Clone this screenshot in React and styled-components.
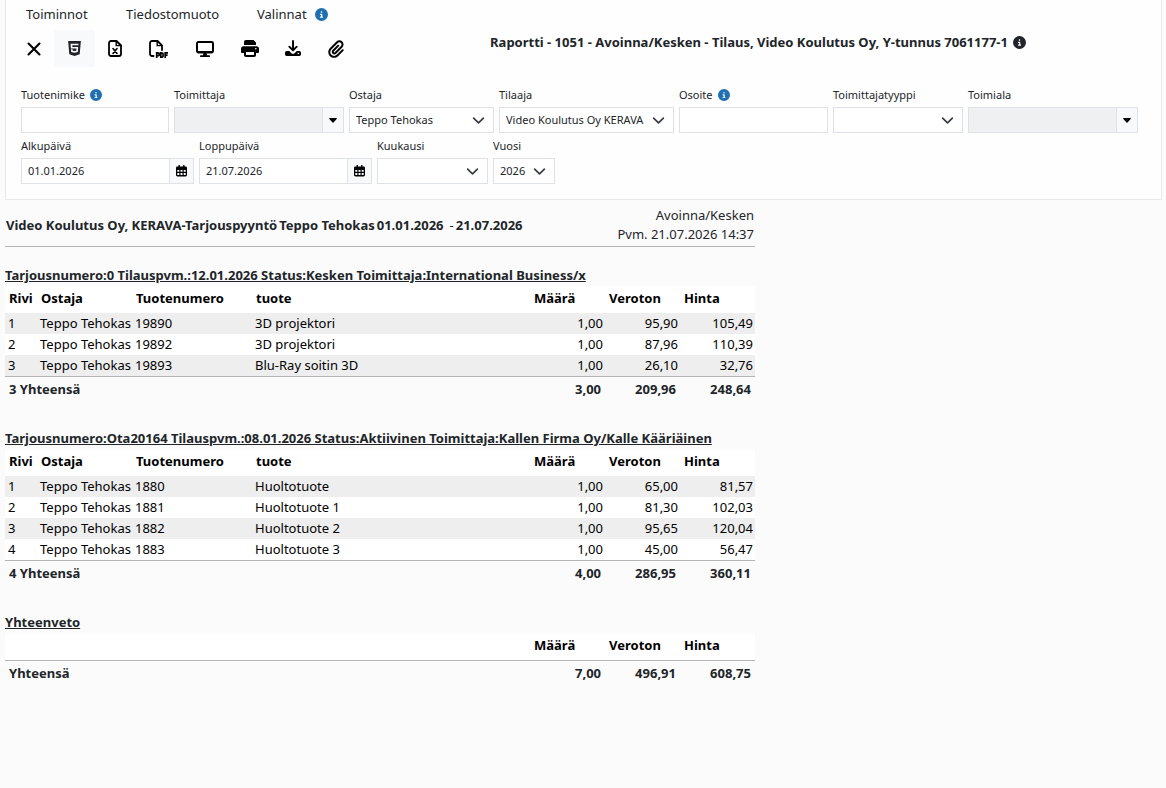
import React from "react";
import styled, { createGlobalStyle } from "styled-components";
import { FaHtml5, FaPaperclip, FaCircleInfo } from "react-icons/fa6";

const CloseIcon = () => (
  <Svg $width={14} $height={14} viewBox="0 0 14 14">
    <path
      d="M1.5 1.5l11 11M12.5 1.5l-11 11"
      stroke="currentColor"
      strokeWidth="2.1"
      strokeLinecap="round"
    />
  </Svg>
);

const ExcelIcon = () => (
  <Svg $width={14} $height={17} viewBox="0 0 14 17">
    <path
      d="M3 1h5.5L13 5.5V14a2 2 0 0 1-2 2H3a2 2 0 0 1-2-2V3a2 2 0 0 1 2-2z"
      fill="none"
      stroke="currentColor"
      strokeWidth="1.8"
      strokeLinejoin="round"
    />
    <path d="M8.2 1v4.6H13z" fill="none" stroke="currentColor" strokeWidth="1.4" />
    <path
      d="M5 8.6l4 4.8M9 8.6l-4 4.8"
      stroke="currentColor"
      strokeWidth="1.6"
      strokeLinecap="round"
    />
  </Svg>
);

const PdfIcon = () => (
  <Svg $width={19} $height={18} viewBox="0 0 19 18">
    <path
      d="M4.5 16H3a2 2 0 0 1-2-2V3a2 2 0 0 1 2-2h5.5L13 5.5V10"
      fill="none"
      stroke="currentColor"
      strokeWidth="1.8"
      strokeLinecap="round"
      strokeLinejoin="round"
    />
    <path d="M8.2 1v4.6H13" fill="none" stroke="currentColor" strokeWidth="1.4" />
    <path
      d="M7.7 18v-5.2h1.2a1.4 1.4 0 0 1 0 2.9H7.7M11.8 12.8v4.4h.8c1 0 1.5-.6 1.5-1.4v-1.6c0-.8-.5-1.4-1.5-1.4zM16.2 18v-5.2H19M16.2 15.2h2.4"
      fill="none"
      stroke="currentColor"
      strokeWidth="1.7"
    />
  </Svg>
);

const DisplayIcon = () => (
  <Svg $width={18} $height={16} viewBox="0 0 18 16">
    <rect
      x="1"
      y="1"
      width="16"
      height="10.5"
      rx="1.4"
      fill="none"
      stroke="currentColor"
      strokeWidth="2"
    />
    <path
      d="M1 10h16v1.5H1zM7.5 12h3l.5 2.2h2.2a.9.9 0 0 1 0 1.8H4.8a.9.9 0 0 1 0-1.8H7z"
      fill="currentColor"
    />
  </Svg>
);

const PrintIcon = () => (
  <Svg $width={18} $height={17} viewBox="0 0 18 17">
    <path
      d="M3 5V2a2 2 0 0 1 2-2h7.5L15 2.500V5zM2.500 6.200h13A2.500 2.500 0 0 1 18 8.700V12a1 1 0 0 1-1 1h-2v-2H3v2H1a1 1 0 0 1-1-1V8.700a2.500 2.500 0 0 1 2.500-2.500z"
      fill="currentColor"
    />
    <circle cx="14.800" cy="8.700" r=".8" fill="#fefefe" />
    <rect
      x="4"
      y="11"
      width="10"
      height="5"
      rx=".8"
      fill="none"
      stroke="currentColor"
      strokeWidth="2"
    />
  </Svg>
);

const DownloadIcon = () => (
  <Svg $width={16} $height={17} viewBox="0 0 16 17">
    <path
      d="M8 1v9M4.300 6.700L8 10.400l3.700-3.700"
      fill="none"
      stroke="currentColor"
      strokeWidth="1.9"
      strokeLinecap="round"
      strokeLinejoin="round"
    />
    <path
      d="M1.800 11h2.400l2.300 2.200a2.200 2.200 0 0 0 3 0l2.300-2.200h2.400A1.800 1.800 0 0 1 16 12.800v1.400a1.800 1.800 0 0 1-1.800 1.800H1.800A1.800 1.800 0 0 1 0 14.200v-1.400A1.800 1.800 0 0 1 1.800 11z"
      fill="currentColor"
    />
    <circle cx="13.300" cy="13.500" r=".8" fill="#fefefe" />
  </Svg>
);

const CalendarIcon = () => (
  <Svg $width={11} $height={12} viewBox="0 0 11 12">
    <path
      d="M3.2.7v2M7.8.7v2"
      stroke="currentColor"
      strokeWidth="1.5"
      strokeLinecap="round"
    />
    <rect x="0" y="1.5" width="11" height="10" rx="1.4" fill="currentColor" />
    <path
      d="M1.3 5h2v1.8h-2zM4.500 5h2v1.8h-2zM7.700 5h2v1.8h-2zM1.3 8h2v2h-2zM4.500 8h2v2h-2zM7.700 8h2v2h-2z"
      fill="#f8f9fa"
    />
  </Svg>
);

const CaretIcon = () => (
  <Svg $width={8} $height={5} viewBox="0 0 8 5">
    <path
      d="M.7 0h6.600a.6.6 0 0 1 .4 1L4.500 4.500a.7.7 0 0 1-1 0L.3 1a.6.6 0 0 1 .4-1z"
      fill="currentColor"
    />
  </Svg>
);

const actions = [
  { label: "Sulje", icon: CloseIcon, width: 41 },
  { label: "HTML", icon: FaHtml5, width: 41, size: 17, active: true },
  { label: "Excel", icon: ExcelIcon, width: 40 },
  { label: "PDF", icon: PdfIcon, width: 46 },
  { label: "Näyttö", icon: DisplayIcon, width: 47 },
  { label: "Tulosta", icon: PrintIcon, width: 43 },
  { label: "Lataa", icon: DownloadIcon, width: 44 },
  { label: "Liite", icon: FaPaperclip, width: 42, size: 18 },
];

const orders = [
  {
    title:
      "Tarjousnumero:0 Tilauspvm.:12.01.2026 Status:Kesken Toimittaja:International Business/x",
    rows: [
      ["1", "Teppo Tehokas", "19890", "3D projektori", "1,00", "95,90", "105,49"],
      ["2", "Teppo Tehokas", "19892", "3D projektori", "1,00", "87,96", "110,39"],
      ["3", "Teppo Tehokas", "19893", "Blu-Ray soitin 3D", "1,00", "26,10", "32,76"],
    ],
    total: ["3 Yhteensä", "3,00", "209,96", "248,64"],
  },
  {
    title:
      "Tarjousnumero:Ota20164 Tilauspvm.:08.01.2026 Status:Aktiivinen Toimittaja:Kallen Firma Oy/Kalle Kääriäinen",
    rows: [
      ["1", "Teppo Tehokas", "1880", "Huoltotuote", "1,00", "65,00", "81,57"],
      ["2", "Teppo Tehokas", "1881", "Huoltotuote 1", "1,00", "81,30", "102,03"],
      ["3", "Teppo Tehokas", "1882", "Huoltotuote 2", "1,00", "95,65", "120,04"],
      ["4", "Teppo Tehokas", "1883", "Huoltotuote 3", "1,00", "45,00", "56,47"],
    ],
    total: ["4 Yhteensä", "4,00", "286,95", "360,11"],
  },
  {
    title: "Yhteenveto",
    summary: true,
    rows: [],
    total: ["Yhteensä", "7,00", "496,91", "608,75"],
  },
];

function Field({ id, label, width, info, children }) {
  return (
    <FieldBox $width={width}>
      <FieldLabel htmlFor={id}>
        {label}
        {info && <FaCircleInfo size={12} color="#1f6fb2" />}
      </FieldLabel>
      {children}
    </FieldBox>
  );
}

function SelectField({ id, label, width, value = "" }) {
  return (
    <Field id={id} label={label} width={width}>
      <Control>
        <Select id={id} defaultValue={value}>
          <option value={value}>{value}</option>
        </Select>
        <Chevron viewBox="0 0 16 16" aria-hidden="true">
          <path d="m2 5 6 6 6-6" />
        </Chevron>
      </Control>
    </Field>
  );
}

function LookupField({ id, label }) {
  return (
    <Field id={id} label={label} width={170}>
      <Control>
        <Input id={id} disabled />
        <AddonButton type="button" $width={22} aria-label={label + " valinta"}>
          <CaretIcon />
        </AddonButton>
      </Control>
    </Field>
  );
}

function DateField({ id, label, value }) {
  return (
    <Field id={id} label={label} width={173}>
      <Control>
        <Input id={id} defaultValue={value} />
        <AddonButton type="button" $width={25} aria-label={label + " kalenteri"}>
          <CalendarIcon />
        </AddonButton>
      </Control>
    </Field>
  );
}

function OrderTable({ order }) {
  return (
    <section>
      <OrderTitle>{order.title}</OrderTitle>
      <Table>
        <colgroup>
          <Col $width={32} />
          <Col $width={95} />
          <Col $width={120} />
          <col />
          <Col $width={75} />
          <Col $width={75} />
          <Col $width={75} />
        </colgroup>
        <thead>
          <tr>
            {order.summary ? (
              <td colSpan={4} />
            ) : (
              <>
                <th>Rivi</th>
                <th>Ostaja</th>
                <th>Tuotenumero</th>
                <th>tuote</th>
              </>
            )}
            <th>Määrä</th>
            <th>Veroton</th>
            <th>Hinta</th>
          </tr>
        </thead>
        <tbody>
          {order.rows.map((row) => (
            <tr key={row[0]}>
              {row.map((cell, i) => (
                <Cell key={i} $number={i > 3}>
                  {cell}
                </Cell>
              ))}
            </tr>
          ))}
        </tbody>
        <tfoot>
          <tr>
            {order.total.map((cell, i) => (
              <TotalCell key={i} colSpan={i === 0 ? 4 : 1} $number={i > 0}>
                {cell}
              </TotalCell>
            ))}
          </tr>
        </tfoot>
      </Table>
    </section>
  );
}

export default function App() {
  return (
    <Page>
      <GlobalStyle />
      <Panel>
        <Top>
          <div>
            <Menu>
              <MenuItem $width={100}>Toiminnot</MenuItem>
              <MenuItem $width={131}>Tiedostomuoto</MenuItem>
              <MenuItem>
                Valinnat
                <FaCircleInfo size={13} color="#1f6fb2" />
              </MenuItem>
            </Menu>
            <Toolbar>
              {actions.map(({ label, icon: Icon, width, size, active }) => (
                <ToolButton
                  key={label}
                  type="button"
                  aria-label={label}
                  $width={width}
                  $active={active}
                >
                  <Icon size={size} />
                </ToolButton>
              ))}
            </Toolbar>
          </div>
          <Title>
            Raportti - 1051 - Avoinna/Kesken - Tilaus, Video Koulutus Oy, Y-tunnus
            7061177-1
            <FaCircleInfo size={13} />
          </Title>
        </Top>
        <Filters>
          <FilterRow>
            <Field id="tuotenimike" label="Tuotenimike" width={148} info>
              <Input id="tuotenimike" />
            </Field>
            <LookupField id="toimittaja" label="Toimittaja" />
            <SelectField id="ostaja" label="Ostaja" width={145} value="Teppo Tehokas" />
            <SelectField
              id="tilaaja"
              label="Tilaaja"
              width={175}
              value="Video Koulutus Oy KERAVA"
            />
            <Field id="osoite" label="Osoite" width={149} info>
              <Input id="osoite" />
            </Field>
            <SelectField id="tyyppi" label="Toimittajatyyppi" width={130} />
            <LookupField id="toimiala" label="Toimiala" />
          </FilterRow>
          <FilterRow>
            <DateField id="alku" label="Alkupäivä" value="01.01.2026" />
            <DateField id="loppu" label="Loppupäivä" value="21.07.2026" />
            <SelectField id="kuukausi" label="Kuukausi" width={111} />
            <SelectField id="vuosi" label="Vuosi" width={62} value="2026" />
          </FilterRow>
        </Filters>
      </Panel>
      <Report>
        <ReportHead>
          <ReportName>
            <span>Video Koulutus Oy, KERAVA-Tarjouspyyntö</span>
            <span>Teppo Tehokas</span>
            <span>01.01.2026</span>
            <Dash>-</Dash>
            <span>21.07.2026</span>
          </ReportName>
          <ReportMeta>
            <div>Avoinna/Kesken</div>
            <div>Pvm. 21.07.2026 14:37</div>
          </ReportMeta>
        </ReportHead>
        {orders.map((order) => (
          <OrderTable key={order.title} order={order} />
        ))}
      </Report>
    </Page>
  );
}

const GlobalStyle = createGlobalStyle`
  * {
    box-sizing: border-box;
  }
  body {
    margin: 0;
    background: #fbfbfb;
    color: #212529;
    font: 13px/20px "Noto Sans", "Open Sans", sans-serif;
  }
  button, input, select {
    font: inherit;
  }
`;

const Svg = styled.svg`
  flex: none;
  width: ${(p) => p.$width}px;
  height: ${(p) => p.$height}px;
`;

const Page = styled.main`
  padding: 0 4px 24px 5px;
`;

const Panel = styled.header`
  padding-bottom: 14px;
  border: 1px solid #e9e9e9;
  border-top: 0;
  background: #fefefe;
`;

const Top = styled.div`
  display: flex;
  padding: 4px 0 0 7px;
`;

const Menu = styled.div`
  display: flex;
  padding-left: 13px;
`;

const MenuItem = styled.span`
  display: flex;
  align-items: center;
  gap: 8px;
  width: ${(p) => (p.$width ? p.$width + "px" : "auto")};
`;

const Toolbar = styled.div`
  display: flex;
  padding-top: 6px;
`;

const ToolButton = styled.button`
  display: flex;
  align-items: center;
  justify-content: center;
  width: ${(p) => p.$width}px;
  height: 37px;
  padding: 0;
  border: 0;
  background: ${(p) => (p.$active ? "#f8f9fa" : "transparent")};
  color: ${(p) => (p.$active ? "#212529" : "#000")};
  cursor: pointer;
`;

const Title = styled.h1`
  display: flex;
  flex: 1;
  align-items: center;
  justify-content: center;
  gap: 5px;
  height: 76px;
  margin: 0;
  padding-right: 2px;
  font-size: 13px;
  font-weight: 700;
`;

const Filters = styled.form`
  padding: 3px 15px 0;
`;

const FilterRow = styled.div`
  display: flex;
  flex-wrap: wrap;
  gap: 0 5px;
`;

const FieldBox = styled.div`
  width: ${(p) => p.$width}px;
  margin-bottom: 1px;
`;

const FieldLabel = styled.label`
  display: flex;
  align-items: center;
  gap: 5px;
  height: 24px;
  font-size: 11px;
`;

const Control = styled.div`
  display: flex;
  position: relative;
`;

const Input = styled.input`
  flex: 1;
  width: 100%;
  min-width: 0;
  height: 26px;
  padding: 0 6px 1px;
  border: 1px solid #dee2e6;
  border-radius: 0;
  background: #fff;
  color: #212529;
  font-size: 11px;

  &:disabled {
    background: #eff0f2;
  }
`;

const Select = styled.select`
  appearance: none;
  width: 100%;
  height: 26px;
  padding: 0 24px 0 6px;
  border: 1px solid #dee2e6;
  border-radius: 0;
  background: #fff;
  color: #212529;
  font-size: 11px;
`;

const Chevron = styled.svg`
  position: absolute;
  top: 7px;
  right: 9px;
  width: 13px;
  height: 13px;
  fill: none;
  stroke: #343a40;
  stroke-width: 2;
  stroke-linecap: round;
  stroke-linejoin: round;
  pointer-events: none;
`;

const AddonButton = styled.button`
  display: flex;
  align-items: center;
  justify-content: center;
  width: ${(p) => p.$width}px;
  height: 26px;
  margin-left: -1px;
  padding: 0;
  border: 1px solid #dee2e6;
  background: #f8f9fa;
  color: #000;
`;

const Report = styled.article`
  max-width: 750px;
`;

const ReportHead = styled.div`
  display: flex;
  align-items: center;
  justify-content: space-between;
  height: 47px;
  margin-bottom: 18px;
  padding: 4px 1px 0;
  border-bottom: 1px solid #b5b5b5;
`;

const ReportName = styled.h2`
  display: flex;
  gap: 2px;
  margin: 0;
  font-size: 13px;
  font-weight: 700;
`;

const Dash = styled.span`
  margin-left: 4px;
  font-weight: 400;
`;

const ReportMeta = styled.div`
  line-height: 19px;
  text-align: right;
`;

const OrderTitle = styled.h3`
  margin: 0 0 1px;
  font-size: 13px;
  font-weight: 700;
  line-height: 20px;
  text-decoration: underline;
`;

const Table = styled.table`
  width: 100%;
  margin-bottom: 25px;
  border-collapse: separate;
  border-spacing: 0;
  table-layout: fixed;
  color: #000;
  line-height: 19px;
  white-space: nowrap;

  thead {
    background: #fff;
  }
  th {
    height: 27px;
    padding: 0 0 2px 4px;
    text-align: left;
  }
  tbody tr {
    background: #fff;
  }
  tbody tr:nth-child(odd) {
    background: #eee;
  }
`;

const Col = styled.col`
  width: ${(p) => p.$width}px;
`;

const Cell = styled.td`
  height: 21px;
  padding: 1px 2px 1px 3px;
  text-align: ${(p) => (p.$number ? "right" : "left")};
`;

const TotalCell = styled.td`
  height: 27px;
  padding: 0 4px 1px;
  border-top: 1px solid #b5b5b5;
  color: #212529;
  font-weight: 700;
  text-align: ${(p) => (p.$number ? "right" : "left")};
`;
